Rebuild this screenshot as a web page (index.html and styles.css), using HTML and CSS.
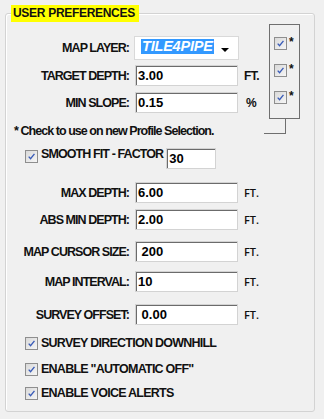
FILE: index.html
```html
<!DOCTYPE html>
<html lang="en">
<head>
  <meta charset="UTF-8">
  <meta name="viewport" content="width=device-width, initial-scale=1.0">
  <title>User Preferences</title>
  <link rel="stylesheet" href="styles.css">
</head>
<body>
<fieldset class="prefs">
  <legend class="prefs-title">USER PREFERENCES</legend>

  <div class="top">
    <div class="top-fields">
      <div class="row">
        <label class="lbl">MAP LAYER:</label>
        <div class="combo">
          <span class="combo-value">TILE4PIPE</span>
          <span class="combo-arrow"></span>
        </div>
      </div>
      <div class="row">
        <label class="lbl">TARGET DEPTH:</label>
        <div class="field">3.00</div>
        <span class="unit unit-bold">FT.</span>
      </div>
      <div class="row">
        <label class="lbl">MIN SLOPE:</label>
        <div class="field">0.15</div>
        <span class="unit unit-bold unit-pct">%</span>
      </div>
    </div>

    <div class="profile-box">
      <div class="profile-item">
        <span class="check"><svg viewBox="0 0 13 13"><path d="M3.2 6.6 L5.4 9.2 L10 3.4"/></svg></span>
        <span class="star">*</span>
      </div>
      <div class="profile-item">
        <span class="check"><svg viewBox="0 0 13 13"><path d="M3.2 6.6 L5.4 9.2 L10 3.4"/></svg></span>
        <span class="star">*</span>
      </div>
      <div class="profile-item">
        <span class="check"><svg viewBox="0 0 13 13"><path d="M3.2 6.6 L5.4 9.2 L10 3.4"/></svg></span>
        <span class="star">*</span>
      </div>
    </div>
  </div>

  <p class="note">* Check to use on new Profile Selection.</p>

  <div class="check-row smooth">
    <span class="check"><svg viewBox="0 0 13 13"><path d="M3.2 6.6 L5.4 9.2 L10 3.4"/></svg></span>
    <span class="check-label">SMOOTH FIT - FACTOR</span>
    <div class="field field-small">30</div>
  </div>

  <div class="row row-max">
    <label class="lbl">MAX DEPTH:</label>
    <div class="field">6.00</div>
    <span class="unit">FT.</span>
  </div>
  <div class="row row-absmin">
    <label class="lbl">ABS MIN DEPTH:</label>
    <div class="field">2.00</div>
    <span class="unit">FT.</span>
  </div>
  <div class="row row-cursor">
    <label class="lbl">MAP CURSOR SIZE:</label>
    <div class="field">&nbsp;200</div>
    <span class="unit">FT.</span>
  </div>
  <div class="row row-interval">
    <label class="lbl">MAP INTERVAL:</label>
    <div class="field">10</div>
    <span class="unit">FT.</span>
  </div>
  <div class="row row-offset">
    <label class="lbl">SURVEY OFFSET:</label>
    <div class="field">&nbsp;0.00</div>
    <span class="unit">FT.</span>
  </div>

  <div class="check-row opt-downhill">
    <span class="check"><svg viewBox="0 0 13 13"><path d="M3.2 6.6 L5.4 9.2 L10 3.4"/></svg></span>
    <span class="check-label">SURVEY DIRECTION DOWNHILL</span>
  </div>
  <div class="check-row opt-auto">
    <span class="check"><svg viewBox="0 0 13 13"><path d="M3.2 6.6 L5.4 9.2 L10 3.4"/></svg></span>
    <span class="check-label">ENABLE "AUTOMATIC OFF"</span>
  </div>
  <div class="check-row opt-voice">
    <span class="check"><svg viewBox="0 0 13 13"><path d="M3.2 6.6 L5.4 9.2 L10 3.4"/></svg></span>
    <span class="check-label">ENABLE VOICE ALERTS</span>
  </div>
</fieldset>
</body>
</html>
```

FILE: styles.css
```css
* {
  margin: 0;
  padding: 0;
  box-sizing: border-box;
}

html, body {
  height: 100%;
}

body {
  background: #f0f0f0;
  font-family: 'Liberation Sans', Arial, sans-serif;
  font-size: 12px;
  color: #111;
  padding: 5px 9px 7px 5px;
  overflow: hidden;
}

/* group box */
.prefs {
  height: 100%;
  border: 1px solid #d3d3d3;
  border-radius: 3px;
  box-shadow: inset 1px 1px 0 #fff;
  padding: 2px 0 0 0;
  min-inline-size: 0;
}

.prefs-title {
  margin-left: 5px;
  background: #ffff00;
  font-weight: bold;
  font-size: 12px;
  line-height: 17px;
  padding: 0 4px 0 2px;
  letter-spacing: -0.3px;
  color: #111;
}

/* label / field rows */
.row {
  display: grid;
  grid-template-columns: 123px 103px auto;
  column-gap: 6px;
  align-items: center;
  height: 21px;
}

.lbl {
  text-align: right;
  font-weight: bold;
  font-size: 12.5px;
  letter-spacing: -0.95px;
  white-space: nowrap;
}

.field {
  height: 21px;
  background: #fff;
  border: 1px solid #d3d3d3;
  box-shadow: inset 1px 1px 0 #6b6b6b;
  font-weight: bold;
  font-size: 13px;
  line-height: 19px;
  padding-left: 2px;
  color: #000;
  white-space: pre;
}

.unit {
  font-family: 'Open Sans', sans-serif;
  font-weight: 600;
  font-size: 11px;
  color: #111;
}

.unit-bold {
  font-family: 'Liberation Sans', Arial, sans-serif;
  font-weight: bold;
  font-size: 12px;
  letter-spacing: -0.6px;
}

.unit-pct {
  padding-left: 2px;
}

/* top block with the profile selection box */
.top {
  display: flex;
  align-items: flex-start;
}

.top-fields {
  width: 263px;
  padding-top: 12px;
  display: flex;
  flex-direction: column;
  gap: 6px;
}

.top-fields .row:first-child {
  height: 23px;
}

.combo {
  position: relative;
  height: 24px;
  width: 105px;
  margin-left: -1px;
  background: #fff;
  border: 1px solid #d9d9d9;
  padding: 2px 0 0 6px;
}

.combo-value {
  display: inline-block;
  background: #3399ff;
  color: #fff;
  font-weight: bold;
  font-style: italic;
  font-size: 14.5px;
  line-height: 15px;
  padding: 0 1px;
  letter-spacing: -0.2px;
}

.combo-arrow {
  position: absolute;
  right: 9px;
  top: 11px;
  border-left: 4px solid transparent;
  border-right: 4px solid transparent;
  border-top: 4px solid #000;
}

.profile-box {
  position: relative;
  width: 31px;
  height: 95px;
  border: 1px solid #6f6f6f;
  padding: 12px 0 0 4px;
  display: flex;
  flex-direction: column;
  gap: 14px;
}

/* bracket line joining the box to the note below */
.profile-box::after {
  content: '';
  position: absolute;
  top: calc(100% + 1px);
  left: -6px;
  width: 21px;
  height: 14px;
  border-right: 1px solid #6f6f6f;
  border-bottom: 1px solid #6f6f6f;
}

.profile-item {
  display: flex;
  align-items: flex-start;
  gap: 2px;
}

.star {
  font-weight: bold;
  font-size: 12px;
  line-height: 10px;
}

.note {
  margin-top: 5px;
  padding-left: 8px;
  line-height: 14px;
  font-weight: bold;
  font-size: 12.5px;
  letter-spacing: -0.95px;
}

/* checkboxes */
.check {
  flex: none;
  display: block;
  width: 13px;
  height: 13px;
  border: 1px solid #8e8e8e;
  background: linear-gradient(135deg, #d9d9d9, #f6f6f6);
}

.check svg {
  display: block;
  width: 11px;
  height: 11px;
}

.check path {
  fill: none;
  stroke: #3a5cb8;
  stroke-width: 1.6;
}

.check-row {
  display: flex;
  align-items: center;
  gap: 3px;
  padding-left: 19px;
}

.check-label {
  font-weight: bold;
  font-size: 12.5px;
  letter-spacing: -0.75px;
  white-space: nowrap;
}

.smooth {
  margin-top: 10px;
  align-items: flex-start;
}

.smooth .check {
  margin-top: 2px;
}

.smooth .check-label {
  line-height: 19px;
  letter-spacing: -0.9px;
}

.field-small {
  width: 50px;
  margin-left: 0;
}

.row-max { margin-top: 13px; }
.row-absmin { margin-top: 6px; }
.row-cursor { margin-top: 11px; }
.row-interval { margin-top: 9px; }
.row-offset { margin-top: 12px; }

.opt-downhill { margin-top: 12px; }
.opt-auto { margin-top: 13px; }
.opt-voice { margin-top: 11px; }

.check-row .check + .check-label {
  line-height: 13px;
}
```
